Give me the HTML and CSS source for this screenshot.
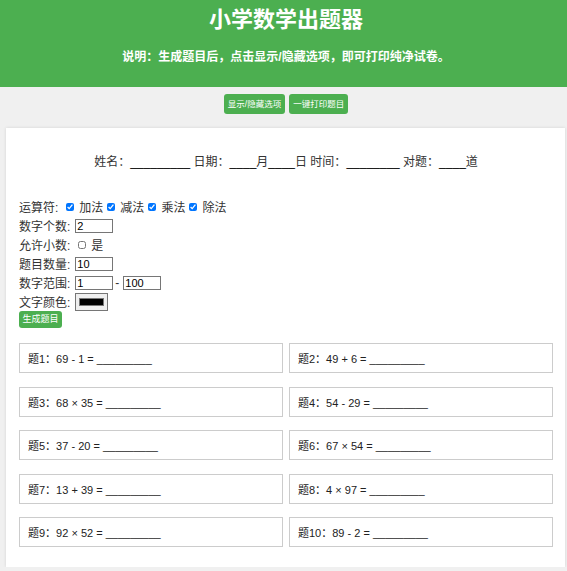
FILE: index.html
```html
<!DOCTYPE html>
<html lang="zh-CN">
<head>
<meta charset="utf-8">
<title>小学数学出题器</title>
<link rel="stylesheet" href="styles.css">
</head>
<body>
<header class="header">
  <h1 class="title">小学数学出题器</h1>
  <p class="note">说明：生成题目后，点击显示/隐藏选项，即可打印纯净试卷。</p>
</header>
<div class="toolbar">
  <button class="btn">显示/隐藏选项</button>
  <button class="btn">一键打印题目</button>
</div>
<main class="paper">
  <div class="info">姓名：<span class="ul">_________</span> 日期：<span class="ul">____</span>月<span class="ul">____</span>日 时间：<span class="ul">________</span> 对题：<span class="ul">____</span>道</div>
  <div class="options">
    <div class="row">
      <span class="lbl">运算符:</span>
      <input type="checkbox" class="cb" checked><span class="cbt">加法</span>
      <input type="checkbox" class="cb" checked><span class="cbt">减法</span>
      <input type="checkbox" class="cb" checked><span class="cbt">乘法</span>
      <input type="checkbox" class="cb" checked><span class="cbt">除法</span>
    </div>
    <div class="row">
      <span class="lbl">数字个数:</span>
      <input type="text" class="num" value="2">
    </div>
    <div class="row">
      <span class="lbl">允许小数:</span>
      <input type="checkbox" class="cb"><span class="cbt">是</span>
    </div>
    <div class="row">
      <span class="lbl">题目数量:</span>
      <input type="text" class="num" value="10">
    </div>
    <div class="row">
      <span class="lbl">数字范围:</span>
      <input type="text" class="num" value="1">
      <span class="dash">-</span>
      <input type="text" class="num" value="100">
    </div>
    <div class="row">
      <span class="lbl">文字颜色:</span>
      <span class="color"><span class="swatch"></span></span>
    </div>
    <button class="btn btn-gen">生成题目</button>
  </div>
  <div class="grid">
    <div class="q">题1：69 - 1 = _________</div>
    <div class="q">题2：49 + 6 = _________</div>
    <div class="q">题3：68 × 35 = _________</div>
    <div class="q">题4：54 - 29 = _________</div>
    <div class="q">题5：37 - 20 = _________</div>
    <div class="q">题6：67 × 54 = _________</div>
    <div class="q">题7：13 + 39 = _________</div>
    <div class="q">题8：4 × 97 = _________</div>
    <div class="q">题9：92 × 52 = _________</div>
    <div class="q">题10：89 - 2 = _________</div>
  </div>
</main>
</body>
</html>
```

FILE: styles.css
```css
* { box-sizing: border-box; }
body {
  margin: 0;
  background: #f0f0f0;
  font-family: "Liberation Sans", "Noto Sans CJK SC", sans-serif;
  color: #222;
}
.header {
  background: #4CAF50;
  color: #fff;
  text-align: center;
  padding: 7px 0 22px 5px;
}
.title {
  margin: 0;
  font-size: 22px;
  line-height: 26px;
  font-weight: bold;
}
.note {
  margin: 16px 0 0;
  font-size: 12px;
  line-height: 16px;
  font-weight: bold;
}
.toolbar {
  text-align: center;
  padding: 7px 0 0 5px;
  height: 27px;
  font-size: 0;
}
.btn {
  background: #4CAF50;
  color: #fff;
  border: none;
  border-radius: 3px;
  font-family: inherit;
  font-size: 8.5px;
  line-height: 10px;
  padding: 5px 4px;
  margin: 0 2px;
  cursor: pointer;
}
.paper {
  margin: 14px 0 0 6px;
  width: 559px;
  background: #fff;
  box-shadow: 0 0 3px rgba(0,0,0,0.12);
  padding: 26px 12px 20px 13px;
}
.info {
  text-align: center;
  font-size: 12px;
  line-height: 17px;
  color: #333;
}
.ul { color: #000; }
.options {
  margin-top: 26px;
  font-size: 12px;
  color: #333;
}
.row {
  display: flex;
  align-items: center;
  height: 19px;
}
.lbl { margin-right: 4px; }
.cb {
  width: 8px;
  height: 8px;
  margin: 0 5px 0 4px;
}
.num {
  width: 38px;
  height: 14px;
  border: 1px solid #767676;
  padding: 0 1px;
  margin-left: 1px;
  font-family: inherit;
  font-size: 11px;
  color: #000;
  border-radius: 0;
}
.dash { margin: 0 3px 0 2px; }
.color {
  display: flex;
  width: 33px;
  height: 18px;
  margin-left: 1px;
  border: 1px solid #767676;
  background: #efefef;
  padding: 4px 3px;
}
.swatch {
  flex: 1;
  background: #000;
  border: 1px solid #777;
}
.btn-gen {
  display: block;
  margin: 0;
  font-size: 9px;
  line-height: 11px;
  padding: 3px 3.5px;
  height: 17px;
}
.grid {
  margin-top: 15px;
  display: grid;
  grid-template-columns: 1fr 1fr;
  column-gap: 6px;
  row-gap: 13.5px;
}
.q {
  height: 30px;
  border: 1px solid #ccc;
  padding: 0 8px;
  display: flex;
  align-items: center;
  font-size: 11px;
  color: #222;
}
```
